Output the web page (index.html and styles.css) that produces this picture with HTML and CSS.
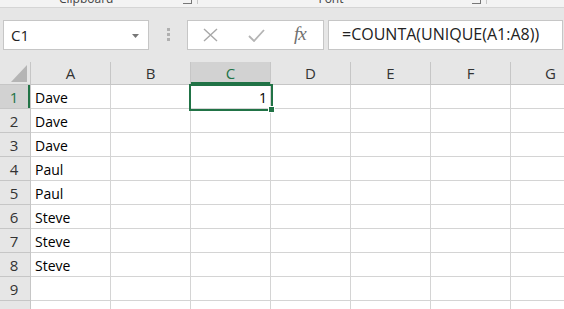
FILE: index.html
```html
<!DOCTYPE html>
<html lang="en">

<head>
    <meta charset="UTF-8">
    <meta name="viewport" content="width=device-width, initial-scale=1.0">
    <title>Book1 - Excel</title>
    <link rel="stylesheet" href="styles.css">
</head>

<body>
    <!-- Ribbon group labels (bottom edge only) -->
    <div class="ribbon">
        <span class="group-label clip">Clipboard</span>
        <span class="launcher" style="margin-left: 70px"></span>
        <span class="group-sep"></span>
        <span class="group-label font">Font</span>
        <span class="launcher" style="margin-left: 128px"></span>
        <span class="group-sep"></span>
    </div>

    <!-- Formula bar -->
    <div class="formula-bar">
        <div class="name-box">
            <span>C1</span>
            <svg class="drop" width="7" height="4" viewBox="0 0 7 4"><path d="M0 0H7L3.5 4Z" fill="#777" /></svg>
        </div>
        <div class="grip"><i></i><i></i><i></i></div>
        <div class="fx-buttons">
            <svg class="cancel" width="15" height="14" viewBox="0 0 15 14">
                <path d="M1 1L14 13M14 1L1 13" stroke="#a8a8a8" stroke-width="1.4" fill="none" />
            </svg>
            <svg class="enter" width="17" height="13" viewBox="0 0 17 13">
                <path d="M1 7L6 12L16 1" stroke="#b4b4b4" stroke-width="1.8" fill="none" />
            </svg>
            <span class="fx">fx</span>
        </div>
        <div class="formula-input">=COUNTA(UNIQUE(A1:A8))</div>
    </div>

    <!-- Sheet -->
    <div class="sheet">
        <div class="corner">
            <svg width="16" height="17" viewBox="0 0 16 17"><path d="M16 0V17H0Z" fill="#b5b5b5" /></svg>
        </div>
        <div class="col-head">A</div>
        <div class="col-head">B</div>
        <div class="col-head active">C</div>
        <div class="col-head">D</div>
        <div class="col-head">E</div>
        <div class="col-head">F</div>
        <div class="col-head">G</div>

        <div class="row-head active">1</div>
        <div class="cell">Dave</div>
        <div class="cell"></div>
        <div class="cell num selected">1<span class="sel-box"><span class="handle"></span></span></div>
        <div class="cell"></div>
        <div class="cell"></div>
        <div class="cell"></div>
        <div class="cell"></div>

        <div class="row-head">2</div>
        <div class="cell">Dave</div>
        <div class="cell"></div><div class="cell"></div><div class="cell"></div><div class="cell"></div><div class="cell"></div><div class="cell"></div>

        <div class="row-head">3</div>
        <div class="cell">Dave</div>
        <div class="cell"></div><div class="cell"></div><div class="cell"></div><div class="cell"></div><div class="cell"></div><div class="cell"></div>

        <div class="row-head">4</div>
        <div class="cell">Paul</div>
        <div class="cell"></div><div class="cell"></div><div class="cell"></div><div class="cell"></div><div class="cell"></div><div class="cell"></div>

        <div class="row-head">5</div>
        <div class="cell">Paul</div>
        <div class="cell"></div><div class="cell"></div><div class="cell"></div><div class="cell"></div><div class="cell"></div><div class="cell"></div>

        <div class="row-head">6</div>
        <div class="cell">Steve</div>
        <div class="cell"></div><div class="cell"></div><div class="cell"></div><div class="cell"></div><div class="cell"></div><div class="cell"></div>

        <div class="row-head">7</div>
        <div class="cell">Steve</div>
        <div class="cell"></div><div class="cell"></div><div class="cell"></div><div class="cell"></div><div class="cell"></div><div class="cell"></div>

        <div class="row-head">8</div>
        <div class="cell">Steve</div>
        <div class="cell"></div><div class="cell"></div><div class="cell"></div><div class="cell"></div><div class="cell"></div><div class="cell"></div>

        <div class="row-head">9</div>
        <div class="cell"></div>
        <div class="cell"></div><div class="cell"></div><div class="cell"></div><div class="cell"></div><div class="cell"></div><div class="cell"></div>

        <div class="row-head">10</div>
        <div class="cell"></div>
        <div class="cell"></div><div class="cell"></div><div class="cell"></div><div class="cell"></div><div class="cell"></div><div class="cell"></div>
    </div>
</body>

</html>
```

FILE: styles.css
```css
* {
    box-sizing: border-box;
}

body {
    margin: 0;
    width: 564px;
    height: 309px;
    overflow: hidden;
    background-color: #ffffff;
    font-family: "Open Sans", "Noto Sans", sans-serif;
}

/* ribbon strip */
.ribbon {
    height: 8px;
    background-color: #f3f3f3;
    border-bottom: 1px solid #d5d5d5;
    display: flex;
    align-items: flex-end;
    overflow: hidden;
}

.ribbon .group-label {
    font-size: 12px;
    line-height: 14px;
    margin-bottom: 1px;
    color: #444;
}

.ribbon .clip {
    margin-left: 59px;
}

.ribbon .font {
    margin-left: 120px;
}

.ribbon .launcher {
    width: 9px;
    height: 4px;
    margin-bottom: 3px;
    border-right: 1px solid #777;
    border-bottom: 1px solid #777;
    align-self: flex-start;
}

.ribbon .group-sep {
    width: 1px;
    height: 4px;
    margin-left: 5px;
    background-color: #c8c8c8;
    align-self: flex-start;
}

/* formula bar */
.formula-bar {
    height: 54px;
    background-color: #e6e6e6;
    display: flex;
    padding: 12px 1px 0 3px;
}

.name-box {
    width: 146px;
    height: 30px;
    background-color: white;
    border: 1px solid #c6c6c6;
    display: flex;
    align-items: center;
    justify-content: space-between;
    padding: 0 9px 0 7px;
    font-size: 15px;
    color: #222;
}

.name-box .drop {
    margin-top: 1px;
}

.grip {
    width: 38px;
    display: flex;
    flex-direction: column;
    align-items: center;
    gap: 2px;
    padding-top: 8px;
}

.grip i {
    width: 3px;
    height: 3px;
    background-color: #b0b0b0;
}

.fx-buttons {
    width: 137px;
    height: 30px;
    background-color: white;
    border: 1px solid #c6c6c6;
    display: flex;
    align-items: center;
    padding-left: 15px;
}

.fx-buttons .enter {
    margin-left: 30px;
    margin-top: 1px;
}

.fx-buttons .fx {
    margin-left: 29px;
    font-family: "Liberation Serif", serif;
    font-style: italic;
    font-size: 19px;
    color: #707070;
    letter-spacing: -1px;
    margin-top: -2px;
}

.formula-input {
    flex: 1;
    height: 30px;
    margin-left: 4px;
    background-color: white;
    border: 1px solid #c6c6c6;
    font-size: 16px;
    line-height: 27px;
    padding-left: 13px;
    color: #222;
}

/* sheet grid */
.sheet {
    display: grid;
    grid-template-columns: 31px repeat(7, 80px);
    grid-template-rows: 23px repeat(10, 24px);
    width: 591px;
    font-size: 14px;
}

.sheet > div {
    border-right: 1px solid #d4d4d4;
    border-bottom: 1px solid #d4d4d4;
}

.sheet .corner {
    background-color: #e6e6e6;
    border-color: #c6c6c6;
    display: flex;
    align-items: flex-end;
    justify-content: flex-end;
    padding: 0 3px 2px 0;
}

.sheet .col-head {
    background-color: #e6e6e6;
    border-color: #c6c6c6;
    text-align: center;
    font-size: 15px;
    line-height: 23px;
    color: #333;
}

.sheet .row-head {
    background-color: #e6e6e6;
    border-color: #c6c6c6;
    text-align: center;
    font-size: 15px;
    line-height: 24px;
    color: #333;
    padding-right: 2px;
}

.sheet .active {
    background-color: #d2d2d2;
    color: #217346;
}

.sheet .col-head.active {
    box-shadow: inset 0 -2px 0 #217346;
}

.sheet .row-head.active {
    box-shadow: inset -2px 0 0 #217346;
}

.sheet .cell {
    line-height: 24px;
    padding: 1px 4px 0;
    color: #000;
}

.sheet .num {
    text-align: right;
    padding-right: 3px;
}

.sheet .selected {
    position: relative;
}

.sel-box {
    position: absolute;
    top: -1px;
    left: -2px;
    right: -3px;
    bottom: -3px;
    border: 2px solid #217346;
}

.sel-box .handle {
    position: absolute;
    right: -4px;
    bottom: -4px;
    width: 7px;
    height: 7px;
    background-color: #217346;
    border: 1px solid white;
}
```
